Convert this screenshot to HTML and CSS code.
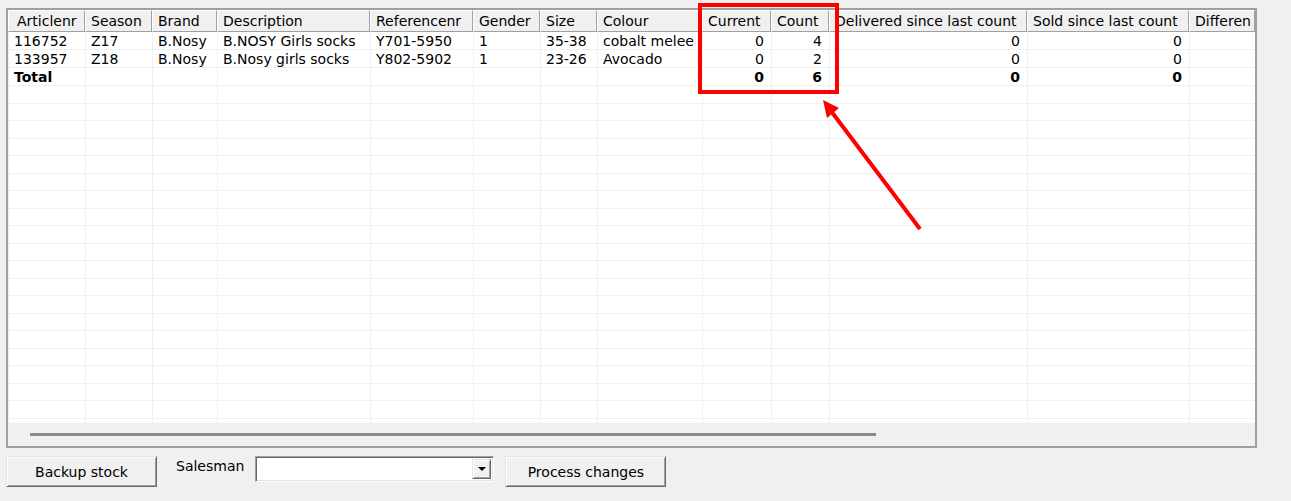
FILE: index.html
```html
<!DOCTYPE html>
<html lang="en">
<head>
    <meta charset="UTF-8">
    <meta name="viewport" content="width=device-width, initial-scale=1.0">
    <title>Stock count</title>
    <link rel="stylesheet" href="styles.css">
</head>
<body>
    <div class="page">
        <div class="grid">
            <div class="grid-view">
                <table class="stock">
                    <colgroup>
                        <col class="c-art">
                        <col class="c-season">
                        <col class="c-brand">
                        <col class="c-desc">
                        <col class="c-ref">
                        <col class="c-gender">
                        <col class="c-size">
                        <col class="c-colour">
                        <col class="c-current">
                        <col class="c-count">
                        <col class="c-delivered">
                        <col class="c-sold">
                        <col class="c-diff">
                    </colgroup>
                    <thead>
                        <tr>
                            <th class="first">Articlenr</th>
                            <th>Season</th>
                            <th>Brand</th>
                            <th>Description</th>
                            <th>Referencenr</th>
                            <th>Gender</th>
                            <th>Size</th>
                            <th>Colour</th>
                            <th>Current</th>
                            <th>Count</th>
                            <th>Delivered since last count</th>
                            <th>Sold since last count</th>
                            <th>Differen</th>
                        </tr>
                    </thead>
                    <tbody id="rows">
                        <tr>
                            <td class="first">116752</td>
                            <td>Z17</td>
                            <td>B.Nosy</td>
                            <td>B.NOSY Girls socks</td>
                            <td>Y701-5950</td>
                            <td>1</td>
                            <td>35-38</td>
                            <td>cobalt melee</td>
                            <td class="num">0</td>
                            <td class="num">4</td>
                            <td class="num">0</td>
                            <td class="num">0</td>
                            <td></td>
                        </tr>
                        <tr>
                            <td class="first">133957</td>
                            <td>Z18</td>
                            <td>B.Nosy</td>
                            <td>B.Nosy girls socks</td>
                            <td>Y802-5902</td>
                            <td>1</td>
                            <td>23-26</td>
                            <td>Avocado</td>
                            <td class="num">0</td>
                            <td class="num">2</td>
                            <td class="num">0</td>
                            <td class="num">0</td>
                            <td></td>
                        </tr>
                        <tr class="total">
                            <td class="first">Total</td>
                            <td></td>
                            <td></td>
                            <td></td>
                            <td></td>
                            <td></td>
                            <td></td>
                            <td></td>
                            <td class="num">0</td>
                            <td class="num">6</td>
                            <td class="num">0</td>
                            <td class="num">0</td>
                            <td></td>
                        </tr>
                    </tbody>
                </table>
            </div>
            <div class="hscroll"><div class="hscroll-thumb"></div></div>
        </div>

        <div class="actions">
            <button class="btn btn-backup">Backup stock</button>
            <label class="salesman-label" for="salesman">Salesman</label>
            <div class="combo" id="salesman">
                <span class="combo-btn"><span class="combo-arrow"></span></span>
            </div>
            <button class="btn btn-process">Process changes</button>
        </div>

        <svg class="annotation" width="1291" height="501" viewBox="0 0 1291 501">
            <rect x="700" y="5" width="137" height="87" fill="none" stroke="#f00" stroke-width="4"/>
            <line x1="920" y1="229" x2="831" y2="111" stroke="#f00" stroke-width="4"/>
            <polygon points="823,100 839,108 827,118" fill="#f00"/>
        </svg>
    </div>

    <script>
        // fill the rest of the grid with empty rows
        const rows = document.getElementById("rows");
        for (let i = 0; i < 20; i++) {
            const tr = document.createElement("tr");
            for (let c = 0; c < 13; c++) {
                tr.appendChild(document.createElement("td"));
            }
            rows.appendChild(tr);
        }
    </script>
</body>
</html>
```

FILE: styles.css
```css
body {
    margin: 0;
    background-color: #f0f0f0;
    font-family: "DejaVu Sans", Verdana, sans-serif;
    font-size: 14px;
    color: #000;
}

.page {
    position: relative;
    width: 1291px;
    height: 501px;
    padding: 8px 0 0 6px;
    box-sizing: border-box;
}

.grid {
    width: 1251px;
    height: 440px;
    box-sizing: border-box;
    border: 2px solid #a0a0a0;
    background-color: #f0f0f0;
}

.grid-view {
    height: 413px;
    overflow: hidden;
    background-color: #fff;
}

.stock {
    table-layout: fixed;
    width: 1247px;
    border-collapse: separate;
    border-spacing: 0;
}

.c-art { width: 77px; }
.c-season { width: 67px; }
.c-brand { width: 65px; }
.c-desc { width: 153px; }
.c-ref { width: 103px; }
.c-gender { width: 67px; }
.c-size { width: 57px; }
.c-colour { width: 105px; }
.c-current { width: 69px; }
.c-count { width: 58px; }
.c-delivered { width: 198px; }
.c-sold { width: 162px; }
.c-diff { width: 66px; }

.stock th {
    height: 22px;
    box-sizing: border-box;
    padding: 0 0 0 5px;
    background-color: #f0f0f0;
    border-top: 1px solid #fff;
    border-left: 1px solid #fff;
    border-right: 1px solid #a0a0a0;
    border-bottom: 1px solid #a0a0a0;
    font-weight: normal;
    text-align: left;
    white-space: nowrap;
    overflow: hidden;
}

.stock th.first {
    padding-left: 8px;
}

.stock td {
    height: 17.5px;
    box-sizing: border-box;
    padding: 1px 5px 0 5px;
    border-left: 1px solid #f0f0f0;
    border-bottom: 1px solid #f0f0f0;
    white-space: nowrap;
    overflow: hidden;
    line-height: 16px;
}

.stock td.num {
    text-align: right;
    padding-right: 7px;
}

.total td {
    font-weight: bold;
}

.hscroll {
    height: 23px;
    box-sizing: border-box;
    padding: 10px 0 0 22px;
}

.hscroll-thumb {
    width: 846px;
    height: 3px;
    background-color: #8a8a8a;
}

.actions {
    display: flex;
    align-items: flex-start;
    margin-top: 8px;
}

.btn {
    height: 31px;
    padding: 0;
    background-color: #f0f0f0;
    border: 1px solid;
    border-color: #e3e3e3 #696969 #696969 #e3e3e3;
    box-shadow: inset 1px 1px #fff, inset -1px -1px #a0a0a0;
    font-family: inherit;
    font-size: 14px;
    color: #000;
}

.btn-backup {
    width: 151px;
}

.btn-process {
    width: 161px;
    margin-left: 11px;
}

.salesman-label {
    margin: 2px 0 0 19px;
    line-height: 16px;
}

.combo {
    position: relative;
    width: 239px;
    height: 26px;
    margin: 0 0 0 11px;
    box-sizing: border-box;
    background-color: #fff;
    border: 1px solid;
    border-color: #a0a0a0 #fff #fff #a0a0a0;
    box-shadow: inset 1px 1px #696969, inset -1px -1px #e3e3e3;
}

.combo-btn {
    position: absolute;
    top: 2px;
    right: 2px;
    width: 19px;
    height: 20px;
    box-sizing: border-box;
    background-color: #f0f0f0;
    border: 1px solid;
    border-color: #e3e3e3 #696969 #696969 #e3e3e3;
    box-shadow: inset 1px 1px #fff, inset -1px -1px #a0a0a0;
    display: flex;
    align-items: center;
    justify-content: center;
}

.combo-arrow {
    width: 0;
    height: 0;
    border-left: 4px solid transparent;
    border-right: 4px solid transparent;
    border-top: 4px solid #000;
}

.annotation {
    position: absolute;
    top: 0;
    left: 0;
    pointer-events: none;
}
```
